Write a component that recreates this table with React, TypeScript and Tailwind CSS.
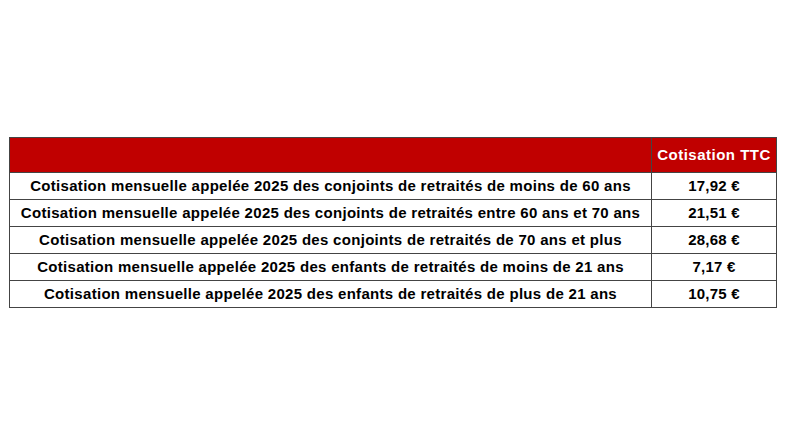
const rows = [
  ["Cotisation mensuelle appelée 2025 des conjoints de retraités de moins de 60 ans", "17,92 €"],
  ["Cotisation mensuelle appelée 2025 des conjoints de retraités entre 60 ans et 70 ans", "21,51 €"],
  ["Cotisation mensuelle appelée 2025 des conjoints de retraités de 70 ans et plus", "28,68 €"],
  ["Cotisation mensuelle appelée 2025 des enfants de retraités de moins de 21 ans", "7,17 €"],
  ["Cotisation mensuelle appelée 2025 des enfants de retraités de plus de 21 ans", "10,75 €"],
];

export default function App() {
  return (
    <div className="w-[792px] h-[445px] bg-white pt-[137px] pl-[9px] font-['Liberation_Sans',Arial,sans-serif]">
      <table className="w-[768px] border-collapse border border-[#444] text-[15px] font-bold text-black">
        <tbody>
          <tr className="h-[35px] bg-[#c00000]">
            <td className="border border-[#444]"></td>
            <td className="w-[125px] border border-[#444] text-center text-white tracking-[0.5px]">Cotisation TTC</td>
          </tr>
          {rows.map(([label, value]) => (
            <tr key={label} className="h-[27px]">
              <td className="border border-[#444] text-center tracking-[0.3px]">{label}</td>
              <td className="border border-[#444] text-center tracking-[0.2px]">{value}</td>
            </tr>
          ))}
        </tbody>
      </table>
    </div>
  );
}
